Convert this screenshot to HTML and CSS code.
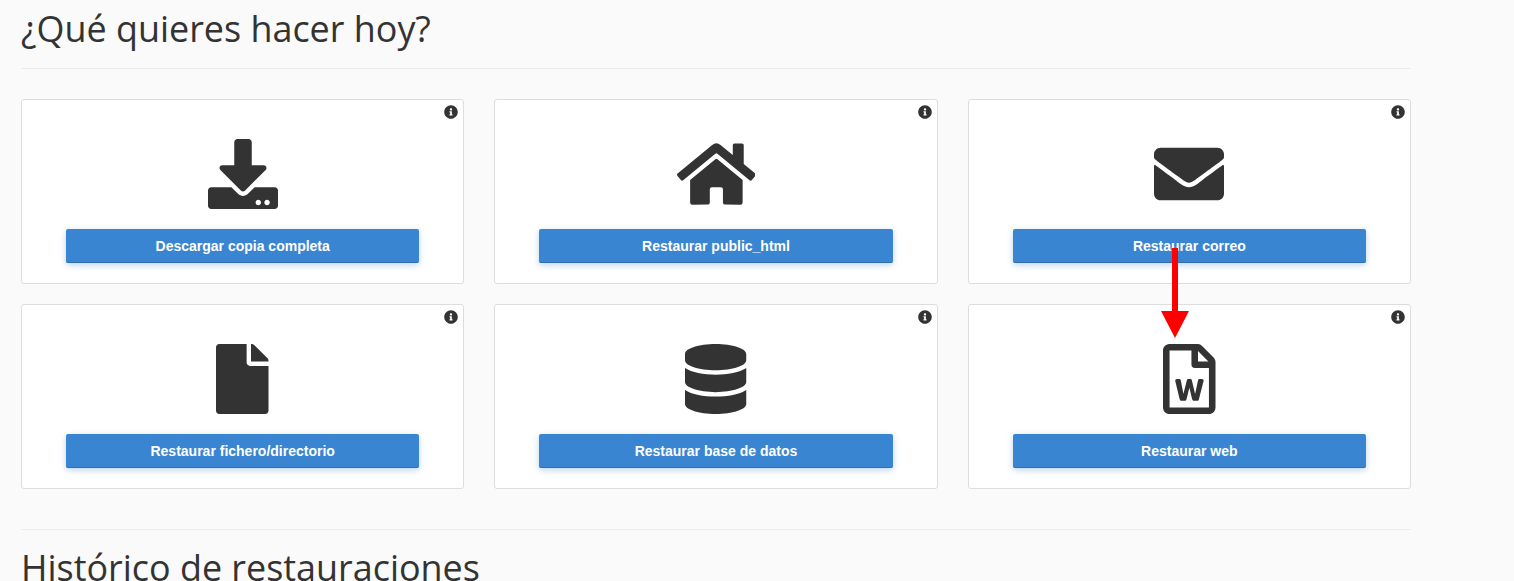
FILE: index.html
```html
<!DOCTYPE html>
<html>
	<head>
		<meta charset="UTF-8">
		<title>Restauraciones</title>
		<link rel="stylesheet" href="styles.css">
	</head>
	<body>
		<svg class="sprite" xmlns="http://www.w3.org/2000/svg">
			<symbol id="info" viewBox="0 0 512 512"><path d="M256 8C119.043 8 8 119.083 8 256c0 136.997 111.043 248 248 248s248-111.003 248-248C504 119.083 392.957 8 256 8zm0 110c23.196 0 42 18.804 42 42s-18.804 42-42 42-42-18.804-42-42 18.804-42 42-42zm56 254c0 6.627-5.373 12-12 12h-88c-6.627 0-12-5.373-12-12v-24c0-6.627 5.373-12 12-12h12v-64h-12c-6.627 0-12-5.373-12-12v-24c0-6.627 5.373-12 12-12h64c6.627 0 12 5.373 12 12v100h12c6.627 0 12 5.373 12 12v24z"/></symbol>
		</svg>
		<div class="page">
			<h2 class="title">¿Qué quieres hacer hoy?</h2>
			<div class="rule"></div>
			<div class="cards">
				<div class="card">
					<svg class="info"><use href="#info"/></svg>
					<svg class="icon" viewBox="0 0 512 512"><path d="M216 0h80c13.3 0 24 10.7 24 24v168h87.7c17.8 0 26.7 21.5 14.1 34.1L269.7 378.3c-7.5 7.5-19.8 7.5-27.3 0L90.1 226.1c-12.6-12.6-3.7-34.1 14.1-34.1H192V24c0-13.3 10.7-24 24-24zm296 376v112c0 13.3-10.7 24-24 24H24c-13.3 0-24-10.7-24-24V376c0-13.3 10.7-24 24-24h146.7l49 49c20.1 20.1 52.5 20.1 72.6 0l49-49H488c13.3 0 24 10.7 24 24zm-124 88c0-11-9-20-20-20s-20 9-20 20 9 20 20 20 20-9 20-20zm64 0c0-11-9-20-20-20s-20 9-20 20 9 20 20 20 20-9 20-20z"/></svg>
					<a href="#" class="btn">Descargar copia completa</a>
				</div>
				<div class="card">
					<svg class="info"><use href="#info"/></svg>
					<svg class="icon" viewBox="0 0 576 512"><path d="M280.37 148.26L96 300.11V464a16 16 0 0 0 16 16l112.06-.29a16 16 0 0 0 15.92-16V368a16 16 0 0 1 16-16h64a16 16 0 0 1 16 16v95.64a16 16 0 0 0 16 16.05L464 480a16 16 0 0 0 16-16V300L295.67 148.26a12.19 12.19 0 0 0-15.3 0zM571.6 251.47L488 182.56V44.05a12 12 0 0 0-12-12h-56a12 12 0 0 0-12 12v72.61L318.47 43a48 48 0 0 0-61 0L4.34 251.47a12 12 0 0 0-1.6 16.9l25.5 31A12 12 0 0 0 45.15 301l235.22-193.74a12.19 12.19 0 0 1 15.3 0L530.9 301a12 12 0 0 0 16.9-1.6l25.5-31a12 12 0 0 0-1.7-16.93z"/></svg>
					<a href="#" class="btn">Restaurar public_html</a>
				</div>
				<div class="card">
					<svg class="info"><use href="#info"/></svg>
					<svg class="icon" viewBox="0 0 512 512"><path d="M502.3 190.8c3.9-3.1 9.7-.2 9.7 4.7V400c0 26.5-21.5 48-48 48H48c-26.5 0-48-21.5-48-48V195.6c0-5 5.7-7.8 9.7-4.7 22.4 17.4 52.1 39.5 154.1 113.6 21.1 15.4 56.7 47.8 92.2 47.6 35.7.3 72-32.8 92.3-47.6 102-74.1 131.6-96.3 154-113.7zM256 320c23.2.4 56.6-29.2 73.4-41.4 132.7-96.3 142.8-104.7 173.4-128.7 5.8-4.5 9.2-11.5 9.2-18.9v-19c0-26.5-21.5-48-48-48H48C21.5 64 0 85.5 0 112v19c0 7.4 3.4 14.3 9.2 18.9 30.6 23.9 40.7 32.4 173.4 128.7 16.8 12.2 50.2 41.8 73.4 41.4z"/></svg>
					<a href="#" class="btn">Restaurar correo</a>
				</div>
				<div class="card">
					<svg class="info"><use href="#info"/></svg>
					<svg class="icon" viewBox="0 0 384 512"><path d="M224 136V0H24C10.7 0 0 10.7 0 24v464c0 13.3 10.7 24 24 24h336c13.3 0 24-10.7 24-24V160H248c-13.2 0-24-10.8-24-24zm160-14.1v6.1H256V0h6.1c6.4 0 12.5 2.5 17 7l97.9 98c4.5 4.5 7 10.6 7 16.9z"/></svg>
					<a href="#" class="btn">Restaurar fichero/directorio</a>
				</div>
				<div class="card">
					<svg class="info"><use href="#info"/></svg>
					<svg class="icon" viewBox="0 0 448 512"><path d="M448 73.143v45.714C448 159.143 347.667 192 224 192S0 159.143 0 118.857V73.143C0 32.857 100.333 0 224 0s224 32.857 224 73.143zM448 176v102.857C448 319.143 347.667 352 224 352S0 319.143 0 278.857V176c48.125 33.143 136.208 48.572 224 48.572S399.874 209.143 448 176zm0 160v102.857C448 479.143 347.667 512 224 512S0 479.143 0 438.857V336c48.125 33.143 136.208 48.572 224 48.572S399.874 369.143 448 336z"/></svg>
					<a href="#" class="btn">Restaurar base de datos</a>
				</div>
				<div class="card">
					<svg class="info"><use href="#info"/></svg>
					<svg class="icon" viewBox="0 0 384 512"><path d="M369.9 97.9L286 14C277 5 264.8-.1 252.1-.1H48C21.5 0 0 21.5 0 48v416c0 26.5 21.5 48 48 48h288c26.5 0 48-21.5 48-48V131.9c0-12.7-5.1-25-14.1-34zM332.1 128H256V51.9l76.1 76.1zM48 464V48h160v104c0 13.3 10.7 24 24 24h104v288H48zm220.1-208c-5.7 0-10.6 4-11.7 9.5-20.6 97.7-20.4 95.4-21 103.5-.2-1.2-.4-2.6-.7-4.3-.8-5.1.3.2-23.6-99.5-1.3-5.4-6.1-9.2-11.7-9.2h-13.3c-5.5 0-10.3 3.8-11.7 9.1-24.4 99-24 96.2-24.8 103.7-.1-1.1-.2-2.5-.5-4.2-.7-5.2-14.1-73.3-19.1-99-1.1-5.6-6-9.7-11.8-9.7h-16.8c-7.8 0-13.5 7.3-11.7 14.8 8 32.6 26.7 109.5 33.2 136 1.3 5.4 6.1 9.1 11.7 9.1h25.2c5.5 0 10.3-3.7 11.6-9.1l17.9-71.4c1.5-6.2 2.5-12 3-17.3l.3 1.9c1.6 10.3 3.2 9.5 4.1 14.8.6 2.5 13.9 57.7 17.7 71.9 1.3 5.3 6.1 9.1 11.6 9.1h24.7c5.5 0 10.3-3.7 11.6-9.1 20.8-81.9 30.2-119 34.5-136 1.9-7.6-3.8-14.9-11.6-14.9h-15.8z"/></svg>
					<a href="#" class="btn">Restaurar web</a>
				</div>
				<!-- flecha roja de la captura -->
				<svg class="arrow" viewBox="0 0 28 90"><path d="M11 0h6v63h11L14 90 0 63h11z"/></svg>
			</div>
			<div class="rule rule-low"></div>
			<h2 class="title title-low">Histórico de restauraciones</h2>
		</div>
	</body>
</html>
```

FILE: styles.css
```css
* {
	margin:0;
	padding:0;
	box-sizing:border-box;
}
html {
	overflow:hidden;
}
body {
	background:#fafafa;
	color:#333;
	font-family:"Liberation Sans",Arial,sans-serif;
}
.sprite {
	display:none;
}
.page {
	width:1390px;
	margin-left:21px;
}
.title {
	font-family:"Open Sans",sans-serif;
	font-size:35.92px;
	font-weight:400;
	line-height:49px;
	margin-top:4px;
	color:#333;
}
.title-low {
	margin-top:13px;
}
.rule {
	height:1px;
	background:#ececec;
	margin-top:15px;
}
.rule-low {
	margin-top:40px;
}
.cards {
	position:relative;
	display:grid;
	grid-template-columns:repeat(3,1fr);
	gap:20px 30px;
	margin-top:30px;
}
.card {
	position:relative;
	display:flex;
	flex-direction:column;
	align-items:center;
	gap:20px;
	height:185px;
	padding:39px 44px 20px;
	background:#fff;
	border:1px solid #ddd;
	border-radius:3px;
}
.icon {
	height:70px;
	fill:#333;
}
.info {
	position:absolute;
	top:5px;
	right:5px;
	width:14px;
	height:14px;
	fill:#333;
}
.btn {
	display:block;
	width:100%;
	height:34px;
	line-height:35px;
	text-align:center;
	text-decoration:none;
	font-size:14px;
	font-weight:700;
	color:#fff;
	background:#3a85d1;
	border-bottom:1px solid #2f6fae;
	border-radius:2px;
	box-shadow:0 2px 6px rgba(58,133,209,.35);
}
.arrow {
	position:absolute;
	top:149px;
	left:1140px;
	width:28px;
	height:90px;
	fill:#f00;
}
```
